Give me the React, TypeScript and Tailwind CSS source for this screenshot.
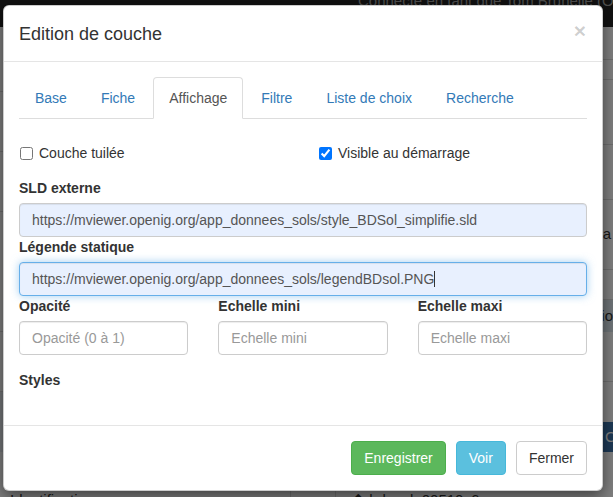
const tabs = ["Base", "Fiche", "Affichage", "Filtre", "Liste de choix", "Recherche"];

function Field({ label, value, placeholder, focused }: { label: string; value?: string; placeholder?: string; focused?: boolean }) {
  return (
    <div>
      <label className="block mb-[5px] font-bold leading-5 text-[#333]">{label}</label>
      <div
        className={`h-[34px] flex items-center px-[12px] rounded-[4px] border text-[#555] ${
          value ? "bg-[#e8f0fe]" : "bg-white"
        } ${
          focused
            ? "border-[#66afe9] shadow-[inset_0_1px_1px_rgba(0,0,0,0.075),0_0_8px_rgba(102,175,233,0.6)]"
            : "border-[#ccc] shadow-[inset_0_1px_1px_rgba(0,0,0,0.075)]"
        }`}
      >
        {value ? (
          <span className="whitespace-nowrap">
            {value}
            {focused && <span className="inline-block w-px h-[16px] bg-[#333] align-[-3px]" />}
          </span>
        ) : (
          <span className="text-[#999] whitespace-nowrap">{placeholder}</span>
        )}
      </div>
    </div>
  );
}

function Background() {
  return (
    <div className="absolute inset-0 bg-white">
      {/* top navbar */}
      <div className="h-[27px] bg-[#222] pl-[358px] overflow-hidden">
        <span className="block text-[#9d9d9d] text-[15px] leading-5 -mt-[9px] whitespace-nowrap">
          Connecté en tant que Tom Brunelle (OPENIG)
        </span>
      </div>
      {/* right side list */}
      <div className="absolute right-0 top-[27px] w-[60px] flex flex-col text-[#333]">
        <div className="h-[33px] border-b border-[#ddd]" />
        <div className="h-[20px] border-b border-[#ddd]" />
        <div className="h-[65px] border-b border-[#ddd]" />
        <div className="h-[55px] border-b border-[#ddd]" />
        <div className="h-[70px] border-b border-[#ddd] flex items-center justify-end pr-[2px] text-[15px]">gna</div>
        <div className="h-[30px] border-b border-[#ddd]" />
        <div className="h-[32px] bg-[#dde9f0] flex items-center justify-end text-[15px] whitespace-nowrap">atio</div>
        <div className="h-[50px] border-b border-[#ddd]" />
        <div className="h-[40px]" />
        <div className="h-[30px] bg-[#3a73ab] text-white flex items-center text-[15px] pl-[52px]">C</div>
      </div>
      {/* left side */}
      <div className="absolute left-0 top-[27px] w-[10px] flex flex-col">
        <div className="h-[65px] border-b border-[#ddd]" />
        <div className="h-[60px] border-b border-[#ddd]" />
        <div className="h-[60px] border-b border-[#ddd]" />
        <div className="h-[120px] border-b border-[#ddd]" />
        <div className="h-[60px] border-b border-[#ddd]" />
        <div className="h-[60px] bg-[#e9eef2]" />
      </div>
      {/* bottom row */}
      <div className="absolute left-0 right-0 top-[489px] h-[20px] flex text-[15px] text-[#333]">
        <div className="w-[290px] pl-[10px] whitespace-nowrap overflow-hidden">Identification</div>
        <div className="w-[45px] border-l border-[#ddd]" />
        <div className="flex-1 border-l border-[#ddd] pl-[16px] whitespace-nowrap">⬆ hd_sol_00510c6</div>
      </div>
    </div>
  );
}

export default function App() {
  return (
    <div
      className="relative w-[613px] h-[497px] overflow-hidden text-[14px]"
      style={{ fontFamily: '"Liberation Sans", Arial, sans-serif' }}
    >
      <Background />
      <div className="absolute inset-0 bg-black/50" />

      {/* Modal */}
      <div className="absolute left-[3px] top-[5px] w-[600px] bg-white rounded-[6px] border border-black/20 shadow-[0_5px_15px_rgba(0,0,0,0.5)] text-[#333]">
        <div className="flex items-center justify-between px-[15px] h-[56px] border-b border-[#e5e5e5]">
          <h4 className="text-[18px] leading-[26px] text-[#333]">Edition de couche</h4>
          <span className="text-[21px] font-bold leading-none text-black/20 -mt-[6px] mr-[1px]">×</span>
        </div>

        <div className="px-[15px] pt-[15px] pb-[35px]">
          <ul className="flex border-b border-[#ddd]">
            {tabs.map((t) => (
              <li key={t} className="-mb-px mr-[2px]">
                <span
                  className={`block px-[15px] py-[10px] leading-5 rounded-t-[4px] border ${
                    t === "Affichage"
                      ? "border-[#ddd] border-b-white bg-white text-[#555]"
                      : "border-transparent text-[#337ab7]"
                  }`}
                >
                  {t}
                </span>
              </li>
            ))}
          </ul>

          <div className="mt-[24px] grid grid-cols-2 gap-[30px] leading-5">
            <label className="flex items-center gap-[6px]">
              <input type="checkbox" className="w-[13px] h-[13px] m-0 ml-px" readOnly />
              <span>Couche tuilée</span>
            </label>
            <label className="flex items-center gap-[6px]">
              <input type="checkbox" className="w-[13px] h-[13px] m-0 ml-[1px]" defaultChecked />
              <span>Visible au démarrage</span>
            </label>
          </div>

          <div className="mt-[15px]">
            <Field label="SLD externe" value="https://mviewer.openig.org/app_donnees_sols/style_BDSol_simplifie.sld" />
            <Field label="Légende statique" value="https://mviewer.openig.org/app_donnees_sols/legendBDsol.PNG" focused />
          </div>

          <div className="grid grid-cols-3 gap-[30px]">
            <Field label="Opacité" placeholder="Opacité (0 à 1)" />
            <Field label="Echelle mini" placeholder="Echelle mini" />
            <Field label="Echelle maxi" placeholder="Echelle maxi" />
          </div>

          <div className="mt-[15px] font-bold leading-5">Styles</div>
        </div>

        <div className="flex justify-end gap-[10px] p-[15px] border-t border-[#e5e5e5]">
          <button className="h-[34px] px-[12px] rounded-[4px] border border-[#4cae4c] bg-[#5cb85c] text-white">Enregistrer</button>
          <button className="h-[34px] px-[12px] rounded-[4px] border border-[#46b8da] bg-[#5bc0de] text-white">Voir</button>
          <button className="h-[34px] px-[12px] rounded-[4px] border border-[#ccc] bg-white text-[#333]">Fermer</button>
        </div>
      </div>
    </div>
  );
}
